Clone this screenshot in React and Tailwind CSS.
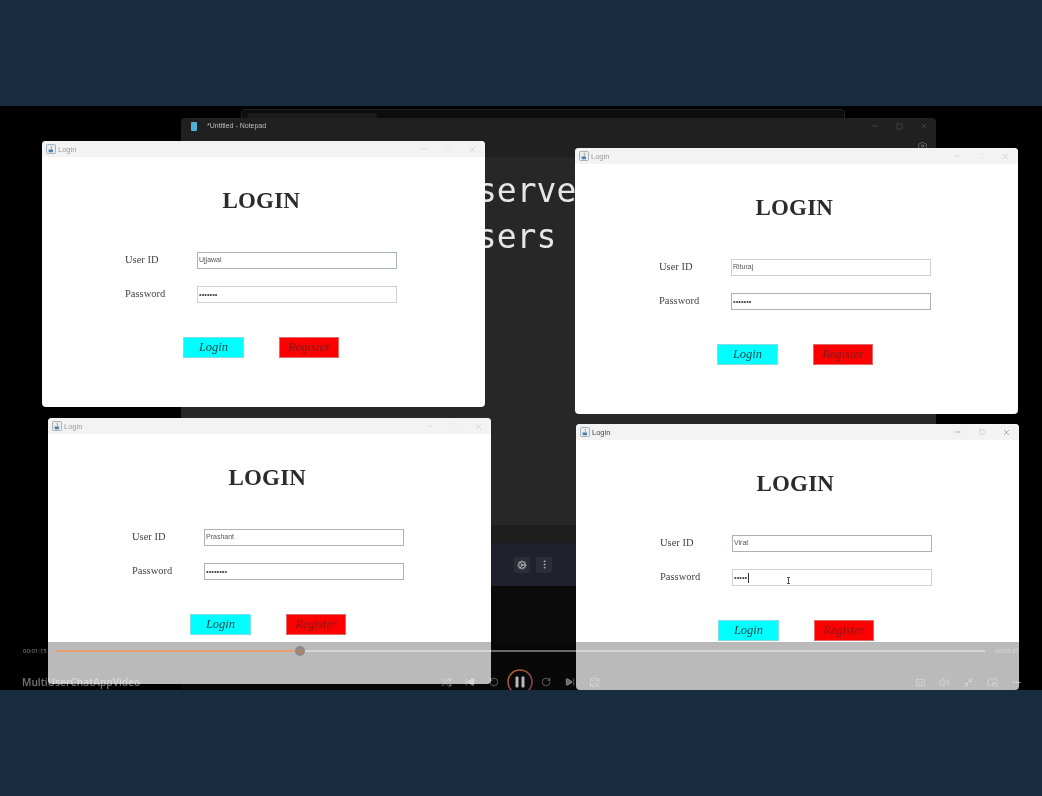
import { Minus, Square, X, Shuffle, SkipBack, SkipForward, RotateCcw, RotateCw, RefreshCwOff, Subtitles, Volume2, Minimize2, PictureInPicture2, Ellipsis, Camera, EllipsisVertical, Cog } from 'lucide-react';

const serif = 'font-["Liberation_Serif",serif]';

const JavaIcon = () => (
    <svg width="10" height="10" viewBox="0 0 10 10" className="shrink-0">
        <rect x="0.5" y="0.5" width="9" height="9" rx="1" fill="#e8eef2" stroke="#8a9aa6" strokeWidth="0.7" />
        <path d="M5.4 1.8c-1 1 .8 1.5-.2 2.9" stroke="#d9622b" strokeWidth="0.8" fill="none" />
        <path d="M2.6 5.6h4.4v1.6c0 .6-.5 1-1 1H3.6c-.5 0-1-.4-1-1z" fill="#4c7fa8" />
    </svg>
);

const LoginWindow = ({ position, user, dots, focused, indent, idBorder, pwBorder, caret }) => (
    <div className={`absolute w-[442.5px] h-[266px] bg-white rounded-[4px] overflow-hidden flex flex-col ${position}`}>
        <div className="h-4 bg-[#f3f3f3] flex items-center pl-[4px] pr-[8px] shrink-0">
            <JavaIcon />
            <span className={`ml-[2px] mt-px text-[7.5px] font-["Liberation_Sans",sans-serif] ${focused ? 'text-[#444]' : 'text-[#9a9a9a]'}`}>Login</span>
            <div className={`ml-auto flex items-center gap-[17px] ${focused ? 'text-[#333]' : 'text-[#aaa]'}`}>
                <Minus size={8} strokeWidth={1} />
                <Square size={6} strokeWidth={1} className={focused ? 'text-[#888]' : 'text-[#ddd]'} />
                <X size={9} strokeWidth={1} />
            </div>
        </div>
        <h1 className={`${serif} mt-[31px] h-[26px] leading-[26px] text-center pr-[4px] text-[23px] font-bold tracking-[0.2px] text-[#2b2b2b]`}>LOGIN</h1>
        <div className={indent ? 'ml-px' : ''}>
            <div className="mt-[38px] pl-[83px] flex flex-col gap-[17px]">
                <div className="flex items-center">
                    <span className={`${serif} w-[72px] -mt-[1px] text-[10.5px] text-[#444]`}>User ID</span>
                    <div className={`w-[200px] h-[17px] border-[1.5px] flex items-center pl-[1px] text-[7px] text-[#555] font-["Liberation_Sans",sans-serif] ${idBorder}`}>{user}</div>
                </div>
                <div className="flex items-center">
                    <span className={`${serif} w-[72px] -mt-[1px] text-[10.5px] text-[#444]`}>Password</span>
                    <div className={`relative w-[200px] h-[17px] border-[1.5px] flex items-center pl-[1px] text-[7.5px] text-[#444] font-["Liberation_Sans",sans-serif] ${pwBorder}`}>
                        {dots}
                        {caret && <span className="w-px h-[10px] bg-[#333] ml-[1px]" />}
                        {caret && <span className="absolute left-[54px] top-[7px] w-[3px] h-[7px] border-y border-[#555] after:absolute after:left-px after:top-0 after:w-px after:h-full after:bg-[#555]" />}
                    </div>
                </div>
            </div>
            <div className="mt-[34px] pl-[141px] flex gap-[35px]">
                <div className={`${serif} w-[61px] h-[21px] bg-[#00ffff] border border-[#7fdfe6] flex items-center justify-center italic text-[12.5px] text-[#1c4a50]`}>Login</div>
                <div className={`${serif} w-[60px] h-[21px] bg-[#ff0000] border border-[#e06a6a] flex items-center justify-center italic text-[12.5px] text-[#7a1a1a]`}>Register</div>
            </div>
        </div>
    </div>
);

const Notepad = () => (
    <div className="absolute left-[181px] top-[12px] w-[755px] h-[425px] flex flex-col rounded-t-[4px] overflow-hidden">
        <div className="h-[16px] bg-[#202020] flex items-center pl-[10px] pr-[8px] shrink-0">
            <span className="w-[6px] h-[9px] bg-[#4fb3d9] rounded-[1px]" />
            <span className='ml-[10px] text-[7px] text-[#bdbdbd] font-["Liberation_Sans",sans-serif]'>*Untitled - Notepad</span>
            <div className="ml-auto flex items-center gap-[17px] text-[#8a8a8a]">
                <Minus size={8} strokeWidth={1} />
                <Square size={7} strokeWidth={1} />
                <X size={8} strokeWidth={1} />
            </div>
        </div>
        <div className="h-[23px] bg-[#202020] flex justify-end items-center pr-[9px] shrink-0 text-[#999]">
            <Camera size={9} strokeWidth={1.5} />
        </div>
        <div className='flex-1 bg-[#272727] pt-[11px] text-[33px] leading-[46px] text-[#e6e6e6] font-["DejaVu_Sans_Mono",monospace]'>
            <div className="ml-[296px]">server</div>
            <div className="ml-[276px]">users</div>
        </div>
        <div className="h-[18px] bg-[#1e1e1e] shrink-0" />
    </div>
);

const Toolbar = () => (
    <div className="absolute left-[181px] top-[437px] w-[755px] h-[43px] bg-[#1f222c] flex items-center justify-end pr-[384px] gap-[6px] text-[#b8b8b8]">
        <div className="w-[16px] h-[16px] bg-[#2b2e38] rounded-[2px] flex items-center justify-center"><Cog size={10} /></div>
        <div className="w-[16px] h-[16px] bg-[#2b2e38] rounded-[2px] flex items-center justify-center"><EllipsisVertical size={11} /></div>
    </div>
);

const IconCell = ({ children }) => (
    <div className="w-[24px] flex items-center justify-center text-white/40">{children}</div>
);

const PauseRing = () => (
    <svg width="26" height="26" viewBox="0 0 26 26" className="shrink-0 opacity-80">
        <defs>
            <linearGradient id="ring" x1="0" y1="0" x2="1" y2="1">
                <stop offset="0" stopColor="#e8832a" />
                <stop offset="1" stopColor="#a03a9c" />
            </linearGradient>
        </defs>
        <circle cx="13" cy="13" r="12" fill="none" stroke="url(#ring)" strokeWidth="1.6" />
        <rect x="8.5" y="7.5" width="3" height="11" rx="1" fill="#e2e2e2" />
        <rect x="14.5" y="7.5" width="3" height="11" rx="1" fill="#e2e2e2" />
    </svg>
);

const Player = () => (
    <div className='absolute left-0 right-0 top-[536px] h-[48px] bg-black/[0.27] overflow-hidden flex flex-col font-["Open_Sans",sans-serif]'>
        <div className="h-[18px] flex items-center pl-[23px] pr-[23px] shrink-0">
            <span className="w-[32px] text-[6px] text-white/50">00:01:15</span>
            <div className="relative w-[930px] h-[2px] bg-white/40">
                <div className="w-[245px] h-full bg-[#e8a070]" />
                <div className="absolute left-[240px] -top-[4px] w-[10px] h-[10px] rounded-full bg-[#8a8a8a] flex items-center justify-center">
                    <div className="w-[5px] h-[5px] rounded-full bg-[#b08468]" />
                </div>
            </div>
            <span className="ml-[10px] text-[6px] text-white/50">00:03:37</span>
        </div>
        <div className="h-[44px] flex items-center pl-[22px] pr-[14px] shrink-0">
            <span className="w-[412px] mt-[1px] text-[10.2px] font-semibold text-white/45">MultiUserChatAppVideo</span>
            <IconCell><Shuffle size={11} /></IconCell>
            <IconCell><SkipBack size={10} fill="currentColor" /></IconCell>
            <IconCell><RotateCcw size={10} /></IconCell>
            <div className="w-[28px] flex items-center justify-center"><PauseRing /></div>
            <IconCell><RotateCw size={10} /></IconCell>
            <IconCell><SkipForward size={10} fill="currentColor" /></IconCell>
            <IconCell><RefreshCwOff size={11} /></IconCell>
            <div className="ml-auto flex">
                <IconCell><Subtitles size={11} /></IconCell>
                <IconCell><Volume2 size={11} /></IconCell>
                <IconCell><Minimize2 size={11} /></IconCell>
                <IconCell><PictureInPicture2 size={11} /></IconCell>
                <IconCell><Ellipsis size={11} /></IconCell>
            </div>
        </div>
    </div>
);

const App = () => {
    return (
        <div className="w-[1042px] h-[796px] flex flex-col bg-[#182c40] overflow-hidden">
            <div className="h-[106px] bg-[#182c40] shrink-0" />
            <div className="relative h-[584px] bg-black overflow-hidden shrink-0 blur-[0.4px]">
                <div className="absolute left-[241px] top-[3px] w-[604px] h-[20px] bg-[#0d0d0d] border border-[#222] rounded-t-[4px]" />
                <div className="absolute left-[247px] top-[7px] w-[130px] h-[16px] bg-[#1b1b1b] rounded-t-[4px]" />
                <Notepad />
                <Toolbar />
                <div className="absolute left-[181px] top-[480px] w-[755px] h-[104px] bg-[#0b0b0b]" />
                <LoginWindow position="left-[42px] top-[35px]" user="Ujjawal" dots="•••••••" idBorder="border-[#aeb2b6]" pwBorder="border-[#cfd1d3]" />
                <LoginWindow position="left-[575px] top-[42px]" indent user="Rituraj" dots="•••••••" idBorder="border-[#cfd1d3]" pwBorder="border-[#aeb2b6]" />
                <LoginWindow position="left-[48px] top-[312px]" indent user="Prashant" dots="••••••••" idBorder="border-[#aeb2b6]" pwBorder="border-[#aeb2b6]" />
                <LoginWindow position="left-[576px] top-[318px]" indent focused user="Virat" dots="•••••" idBorder="border-[#aeb2b6]" pwBorder="border-[#cfd1d3]" caret />
                <Player />
            </div>
            <div className="flex-1 bg-[#182c40]" />
        </div>
    );
};

export default App;
